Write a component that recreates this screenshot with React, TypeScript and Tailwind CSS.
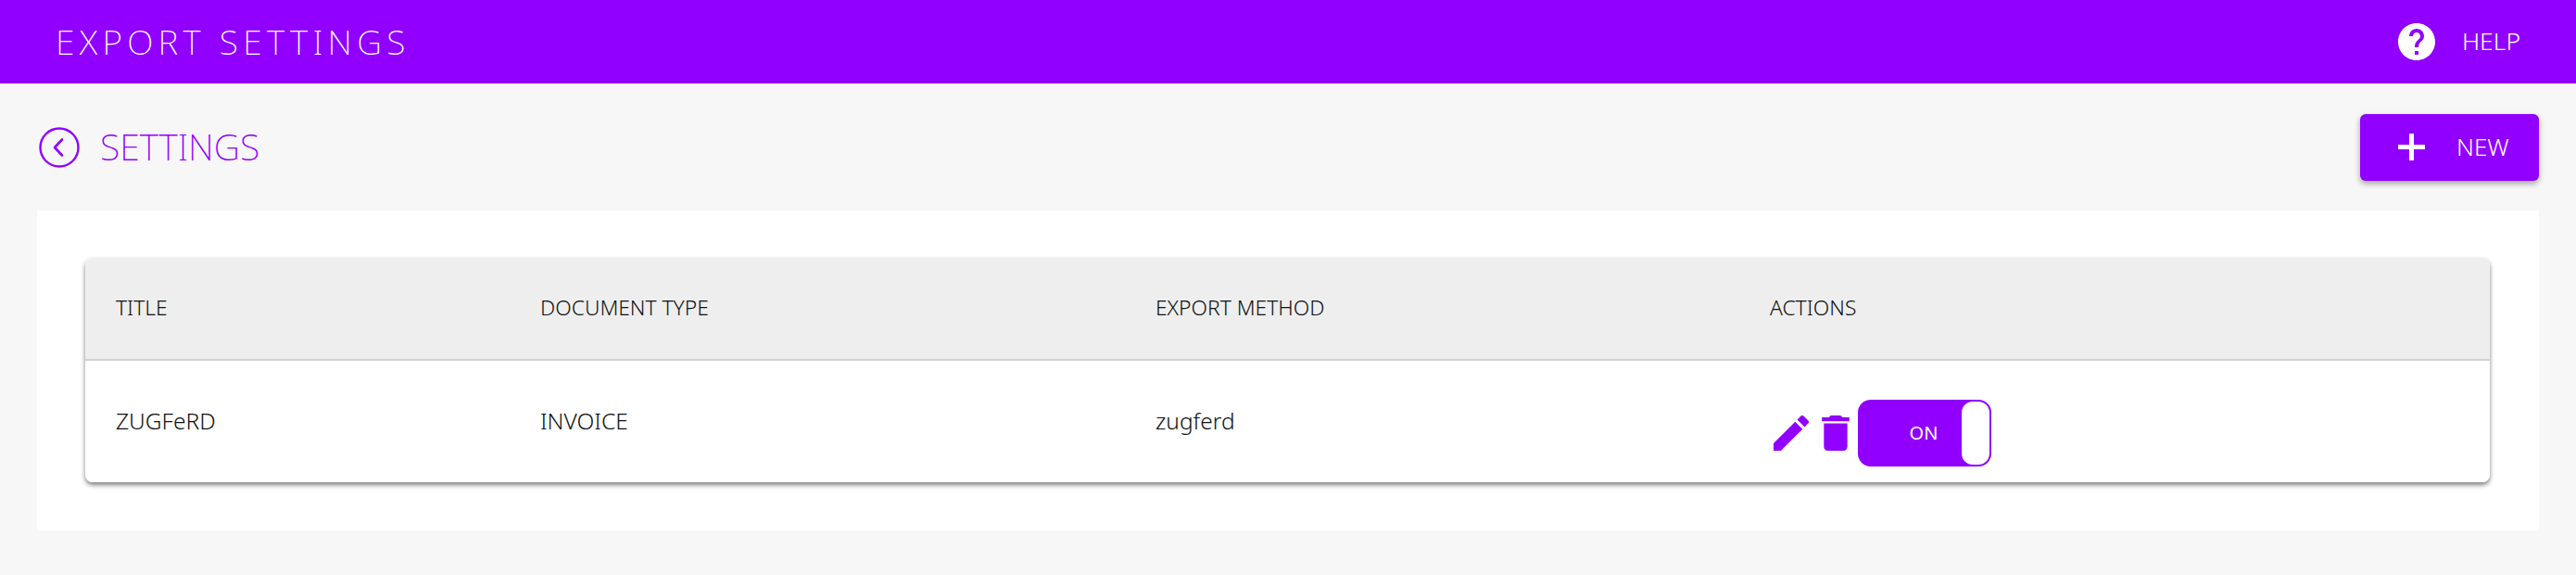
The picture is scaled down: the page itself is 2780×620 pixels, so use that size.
const font = { thin: "font-['Noto_Sans',sans-serif]" };

function BackIcon() {
  return (
    <svg className="w-[44px] h-[44px] text-[#9100ff]" viewBox="0 0 44 44" fill="none" stroke="currentColor">
      <circle cx="22" cy="22" r="20.5" strokeWidth={2.4} />
      <path d="M25 13.5L17 22l8 8.5" strokeWidth={2.6} strokeLinecap="round" strokeLinejoin="round" />
    </svg>
  );
}

function HelpIcon() {
  return (
    <svg className="w-[40px] h-[40px]" viewBox="2 2 20 20" fill="#ffffff">
      <path d="M12 2C6.48 2 2 6.48 2 12s4.48 10 10 10 10-4.48 10-10S17.52 2 12 2zm1 17h-2v-2h2v2zm2.07-7.75l-.9.92C13.45 12.9 13 13.5 13 15h-2v-.5c0-1.1.45-2.1 1.17-2.83l1.24-1.26c.37-.36.59-.86.59-1.41 0-1.1-.9-2-2-2s-2 .9-2 2H8c0-2.21 1.79-4 4-4s4 1.79 4 4c0 .88-.36 1.68-.93 2.25z" />
    </svg>
  );
}

function PlusIcon() {
  return (
    <svg className="w-[29px] h-[29px]" viewBox="0 0 29 29" fill="#ffffff">
      <path d="M12 0h5v12h12v5H17v12h-5V17H0v-5h12z" />
    </svg>
  );
}

function EditIcon() {
  return (
    <svg className="w-[38px] h-[38px] text-[#9100ff]" viewBox="3 3 18 18" fill="currentColor">
      <path d="M3 17.25V21h3.75L17.81 9.94l-3.75-3.75L3 17.25zM20.71 7.04a1 1 0 0 0 0-1.41l-2.34-2.34a1 1 0 0 0-1.41 0l-1.83 1.83 3.75 3.75 1.83-1.83z" />
    </svg>
  );
}

function TrashIcon() {
  return (
    <svg className="w-[30px] h-[38px] text-[#9100ff]" viewBox="5 3 14 18" fill="currentColor">
      <path d="M6 19c0 1.1.9 2 2 2h8c1.1 0 2-.9 2-2V7H6v12zM19 4h-3.5l-1-1h-5l-1 1H5v2h14V4z" />
    </svg>
  );
}

function Toggle() {
  return (
    <div className="w-[144px] h-[72px] rounded-[14px] bg-[#9100ff] p-[2px] flex items-center justify-end">
      <span className="flex-1 pl-[28px] text-center text-[20px] font-normal text-white">ON</span>
      <div className="w-[30px] h-[68px] rounded-[12px] bg-white" />
    </div>
  );
}

const columns = 'grid grid-cols-[458px_664px_663px_1fr] items-center pl-[33px]';

export default function App() {
  return (
    <div className={`h-[620px] bg-[#f7f7f7] ${font.thin} font-light`}>
      <header className="h-[90px] bg-[#9100ff] flex items-center justify-between pl-[60px] pr-[60px]">
        <h1 className="text-[37px] font-[250] text-white tracking-[5.3px]">EXPORT SETTINGS</h1>
        <div className="flex items-center gap-[29px]">
          <HelpIcon />
          <span className="text-[26.5px] font-light text-white">HELP</span>
        </div>
      </header>

      <div className="px-[40px]">
        <div className="h-[137px] flex items-center justify-between">
          <div className="flex items-center gap-[22px] pl-[2px]">
            <BackIcon />
            <span className="text-[39px] font-[250] text-[#9100ff]">SETTINGS</span>
          </div>
          <button className="w-[193px] h-[72px] rounded-[6px] bg-[#9100ff] flex items-center pl-[41px] gap-[34px] text-white shadow-[0_3px_6px_rgba(0,0,0,0.35)]">
            <PlusIcon />
            <span className="text-[26px] font-light">NEW</span>
          </button>
        </div>

        <div className="h-[345px] bg-white pt-[51px] pl-[52px] pr-[53px]">
          <div className="h-[242px] rounded-[8px] overflow-hidden shadow-[0_3px_5px_rgba(0,0,0,0.5)]">
            <div className={`${columns} h-[111px] bg-[#eeeeee] border-b-2 border-[#d2d2d2] text-[22.8px] text-[#111111]`}>
              <span>TITLE</span>
              <span>DOCUMENT TYPE</span>
              <span>EXPORT METHOD</span>
              <span>ACTIONS</span>
            </div>
            <div className={`${columns} h-[131px] bg-white text-[24.5px] text-[#111111]`}>
              <span>ZUGFeRD</span>
              <span>INVOICE</span>
              <span>zugferd</span>
              <div className="flex items-center gap-[9px] ml-[4px] mt-[24px]">
                <div className="flex items-center gap-[14px]">
                  <EditIcon />
                  <TrashIcon />
                </div>
                <Toggle />
              </div>
            </div>
          </div>
        </div>
      </div>
    </div>
  );
}
